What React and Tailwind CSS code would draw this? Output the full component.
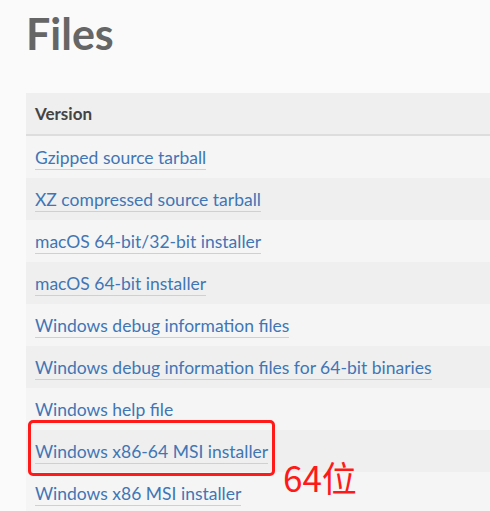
import React from 'react'

const files = [
    'Gzipped source tarball',
    'XZ compressed source tarball',
    'macOS 64-bit/32-bit installer',
    'macOS 64-bit installer',
    'Windows debug information files',
    'Windows debug information files for 64-bit binaries',
    'Windows help file',
    'Windows x86-64 MSI installer',
    'Windows x86 MSI installer',
]

export default function App() {
    return (
        <div className="relative h-[511px] w-[490px] overflow-hidden bg-[#fafafa] font-['Lato','Open_Sans',sans-serif]">
            <h1 className="pl-[26px] pt-[8px] text-[43px] font-bold leading-[52px] text-[#666666]">Files</h1>

            <div className="mt-[33px] ml-[26px] w-[480px]">
                {/* header */}
                <div className="flex h-[43px] items-center border-b-2 border-[#dddddd] bg-[#efefef] pl-[9px]">
                    <span className="text-[17px] font-bold text-[#444444]">Version</span>
                </div>
                {files.map((name, i) => (
                    <div
                        key={name}
                        className={i % 2 === 0 ? 'flex h-[42px] items-center bg-[#f5f5f5] pl-[9px]' : 'flex h-[42px] items-center bg-[#efefef] pl-[9px]'}
                    >
                        <a href="#" className="mt-[2px] border-b-[1.5px] border-[#ffd343] text-[17.5px] leading-[22px] text-[#3f76b5]">
                            {name}
                        </a>
                    </div>
                ))}
            </div>

            {/* annotation */}
            <div className="absolute left-[28px] top-[420px] h-[56px] w-[247px] rounded-[5px] border-[3px] border-[#ff1a1a]" />
            <div className="absolute left-[283px] top-[455px] font-['Noto_Sans_CJK_SC',sans-serif] text-[35px] leading-[44px] text-[#ff1a1a]">
                64位
            </div>
        </div>
    )
}
